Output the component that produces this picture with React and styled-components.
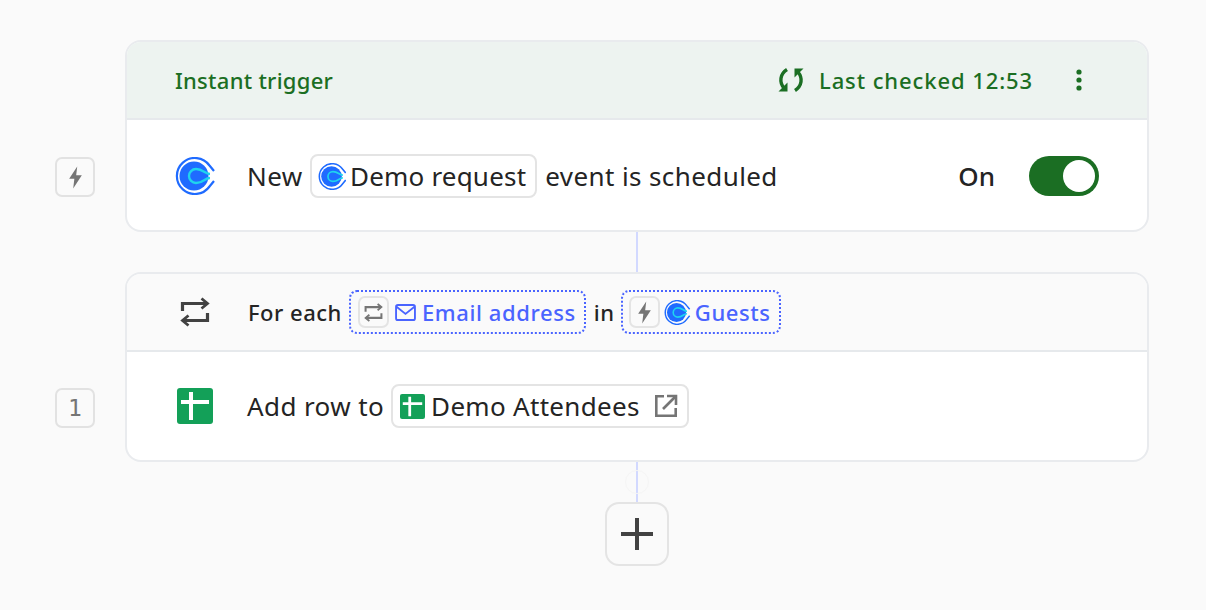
import React from "react";
import styled, { createGlobalStyle } from "styled-components";

const GlobalStyle = createGlobalStyle`
  html, body { margin: 0; padding: 0; background: #fafafa; }
  body { font-family: "Noto Sans", "Open Sans", sans-serif; color: #242424; }
`;

const Page = styled.div`
  width: 1206px;
  height: 610px;
  box-sizing: border-box;
  padding: 40px 57px 0 55px;
  overflow: hidden;
`;

const Step = styled.div`
  display: grid;
  grid-template-columns: 40px 1024px;
  column-gap: 30px;
`;

const Card = styled.div`
  background: #fff;
  border: 2px solid #e9ebee;
  border-radius: 16px;
  overflow: hidden;
  grid-column: 2;
  grid-row: 1;
  box-sizing: border-box;
  height: ${(p) => p.$height}px;
  display: flex;
  flex-direction: column;
`;

const Gutter = styled.div`
  grid-column: 1;
  grid-row: 1;
  display: flex;
  flex-direction: column;
  justify-content: flex-end;
  padding-bottom: ${(p) => p.$bottom}px;
`;

const Badge = styled.div`
  width: 40px;
  height: 40px;
  box-sizing: border-box;
  border: 2px solid #e2e2e2;
  border-radius: 7px;
  display: flex;
  align-items: center;
  justify-content: center;
  color: #757575;
  font-family: "DejaVu Sans Mono", monospace;
  font-size: 23px;
`;

const TriggerHeader = styled.div`
  height: 78px;
  flex: none;
  box-sizing: border-box;
  background: #edf3f0;
  border-bottom: 2px solid #e6e9ec;
  display: flex;
  align-items: center;
  padding: 0 64px 0 48px;
  color: #1b6e23;
  font-size: 22px;
  font-weight: 500;
  letter-spacing: 0.27px;
`;

const HeaderRight = styled.div`
  margin-left: auto;
  display: flex;
  align-items: center;
`;

const CheckedText = styled.span`
  margin-left: 15px;
  margin-right: 42px;
  letter-spacing: 0.9px;
`;

const LoopHeader = styled.div`
  height: 78px;
  flex: none;
  box-sizing: border-box;
  background: #fafafa;
  border-bottom: 2px solid #e6e9ec;
  display: flex;
  align-items: center;
  padding-left: 53px;
  font-size: 22px;
  font-weight: 500;
  letter-spacing: 0.5px;
`;

const Row = styled.div`
  flex: 1;
  display: flex;
  align-items: center;
  padding: ${(p) => p.$top}px 48px 0;
  font-size: 26px;
  letter-spacing: 0.4px;
`;

const AppIconSlot = styled.div`
  width: 40px;
  height: 38px;
  margin-right: 32px;
  display: flex;
  align-items: center;
  justify-content: center;
  flex: none;
`;

const LoopIconSlot = styled(AppIconSlot)`
  width: 30px;
  height: 30px;
  margin-right: 38px;
`;

const Chip = styled.span`
  display: inline-flex;
  align-items: center;
  height: 44px;
  box-sizing: border-box;
  margin: 0 8px 0 7px;
  padding: 0 9px 0 ${(p) => p.$left}px;
  gap: ${(p) => p.$gap}px;
  border: 2px solid #e4e4e4;
  border-radius: 8px;
  letter-spacing: ${(p) => p.$spacing}px;
`;

const TokenChip = styled.span`
  display: inline-flex;
  align-items: center;
  height: 44px;
  box-sizing: border-box;
  margin: 0 8px 0 7px;
  padding: 0 8px 0 ${(p) => p.$left}px;
  gap: ${(p) => p.$gap}px;
  border: 2px dotted #4a64ff;
  border-radius: 8px;
  color: #4a64ff;
  letter-spacing: 0.6px;
`;

const MiniBadge = styled.span`
  width: 31px;
  height: 32px;
  box-sizing: border-box;
  border: 2px solid #e4e4e4;
  border-radius: 7px;
  display: inline-flex;
  align-items: center;
  justify-content: center;
`;

const LinkIconWrap = styled.span`
  display: inline-flex;
  margin-left: 8px;
`;

const Toggle = styled.div`
  width: 70px;
  height: 40px;
  box-sizing: border-box;
  padding: 4px;
  border-radius: 20px;
  background: #1b6e23;
  display: flex;
  justify-content: flex-end;
`;

const Knob = styled.div`
  width: 32px;
  height: 32px;
  border-radius: 50%;
  background: #fff;
`;

const OnLabel = styled.span`
  margin-left: auto;
  margin-right: 34px;
  font-weight: 500;
  letter-spacing: 0;
`;

const Connector = styled.div`
  width: 2px;
  height: 40px;
  margin-left: 581px;
  background: #d2d9ff;
  position: relative;
`;

const GhostRing = styled.div`
  position: absolute;
  left: -11px;
  top: 8px;
  width: 24px;
  height: 24px;
  box-sizing: border-box;
  border: 1px solid #f5f5f5;
  border-radius: 50%;
`;

const AddButton = styled.button`
  display: flex;
  align-items: center;
  justify-content: center;
  width: 64px;
  height: 64px;
  margin-left: 550px;
  padding: 0;
  background: #fafafa;
  border: 2px solid #e4e4e4;
  border-radius: 14px;
`;

const Bolt = ({ size = 23 }) => (
  <svg width={size} height={size} viewBox="0 0 20 20">
    <path d="M11.5 0.5 L4.5 11 H9 L8 19.5 L15.5 8 H10.6 Z" fill="#757575" />
  </svg>
);

const Calendly = ({ size = 38 }) => (
  <svg width={(size * 40) / 38} height={size} viewBox="0 0 40 38" fill="none">
    <path d="M39 14 L34.5 8.5 A18 18 0 1 0 34.5 29.5 L39 24" stroke="#1f6bff" strokeWidth="2.2" />
    <circle cx="19" cy="19" r="14.5" fill="#1f6bff" />
    <path d="M35 17 C29.5 17 28.5 12 21 12 A7 7 0 0 0 21 26 C28.5 26 29.5 21 35 21" stroke="#1fd4ee" strokeWidth="2.4" />
  </svg>
);

const Sheets = ({ size = 36 }) => (
  <svg width={size} height={size} viewBox="0 0 36 36">
    <rect width="36" height="36" rx="3" fill="#13a058" />
    <path d="M4 12 H12 V4 H16 V12 H32 V16 H16 V32 H12 V16 H4 Z" fill="#fff" />
  </svg>
);

const LoopIcon = ({ size = 30, color = "#424242" }) => (
  <svg width={size} height={size} viewBox="0 0 30 30" fill="none" stroke={color} strokeWidth="3.2">
    <path d="M2.5 14 V6.5 H27" />
    <path d="M21.5 1.5 L27.5 6.5 L21.5 11.5" strokeWidth="2.8" />
    <path d="M27.5 16 V23.5 H3" />
    <path d="M8.5 18.5 L2.5 23.5 L8.5 28.5" strokeWidth="2.8" />
  </svg>
);

const Refresh = () => (
  <svg width="26" height="26" viewBox="0 0 26 26" fill="none" stroke="#1b6e23" strokeWidth="3.4">
    <path d="M9 2.5 C2 7 1 15 6 21" />
    <path d="M0.5 24.5 H9.5 V15.5 Z" fill="#1b6e23" stroke="none" />
    <path d="M17 23.5 C24 19 25 11 20 5" />
    <path d="M25.5 1.5 H16.5 V10.5 Z" fill="#1b6e23" stroke="none" />
  </svg>
);

const Dots = () => (
  <svg width="8" height="24" viewBox="0 0 8 24" fill="#1b6e23">
    <circle cx="4" cy="4" r="2.6" />
    <circle cx="4" cy="12" r="2.6" />
    <circle cx="4" cy="20" r="2.6" />
  </svg>
);

const Mail = () => (
  <svg width="21" height="17" viewBox="0 0 22 18" fill="none" stroke="#4a64ff" strokeWidth="2">
    <rect x="1" y="1" width="20" height="16" rx="2" />
    <path d="M1.5 3 L11 10.5 L20.5 3" />
  </svg>
);

const ExternalLink = () => (
  <svg width="24" height="24" viewBox="0 0 24 24" fill="none" stroke="#757575" strokeWidth="2.6">
    <path d="M10 2.3 H2.3 V21.7 H21.7 V14" />
    <path d="M9 15 L21 3" />
    <path d="M13 2 H22 V11" />
  </svg>
);

const Plus = () => (
  <svg width="32" height="32" viewBox="0 0 32 32" fill="#424242">
    <path d="M14 0 H18 V14 H32 V18 H18 V32 H14 V18 H0 V14 H14 Z" />
  </svg>
);

const App = () => {
  return (
    <Page>
      <GlobalStyle />
      <Step>
        <Gutter $bottom={35}>
          <Badge>
            <Bolt />
          </Badge>
        </Gutter>
        <Card $height={192}>
          <TriggerHeader>
            Instant trigger
            <HeaderRight>
              <Refresh />
              <CheckedText>Last checked 12:53</CheckedText>
              <Dots />
            </HeaderRight>
          </TriggerHeader>
          <Row $top={2}>
            <AppIconSlot>
              <Calendly />
            </AppIconSlot>
            New
            <Chip $left={6} $gap={4} $spacing={0.2}>
              <Calendly size={27} />
              Demo request
            </Chip>
            event is scheduled
            <OnLabel>On</OnLabel>
            <Toggle>
              <Knob />
            </Toggle>
          </Row>
        </Card>
      </Step>
      <Connector />
      <Step>
        <Gutter $bottom={34}>
          <Badge>1</Badge>
        </Gutter>
        <Card $height={190}>
          <LoopHeader>
            <LoopIconSlot>
              <LoopIcon />
            </LoopIconSlot>
            For each
            <TokenChip $left={7} $gap={6}>
              <MiniBadge>
                <LoopIcon size={19} color="#757575" />
              </MiniBadge>
              <Mail />
              Email address
            </TokenChip>
            in
            <TokenChip $left={6} $gap={4}>
              <MiniBadge>
                <Bolt />
              </MiniBadge>
              <Calendly size={25} />
              Guests
            </TokenChip>
          </LoopHeader>
          <Row $top={0}>
            <AppIconSlot>
              <Sheets />
            </AppIconSlot>
            Add row to
            <Chip $left={7} $gap={6} $spacing={0.3}>
              <Sheets size={25} />
              Demo Attendees
              <LinkIconWrap>
                <ExternalLink />
              </LinkIconWrap>
            </Chip>
          </Row>
        </Card>
      </Step>
      <Connector>
        <GhostRing />
      </Connector>
      <AddButton aria-label="Add step">
        <Plus />
      </AddButton>
    </Page>
  );
};

export default App;
